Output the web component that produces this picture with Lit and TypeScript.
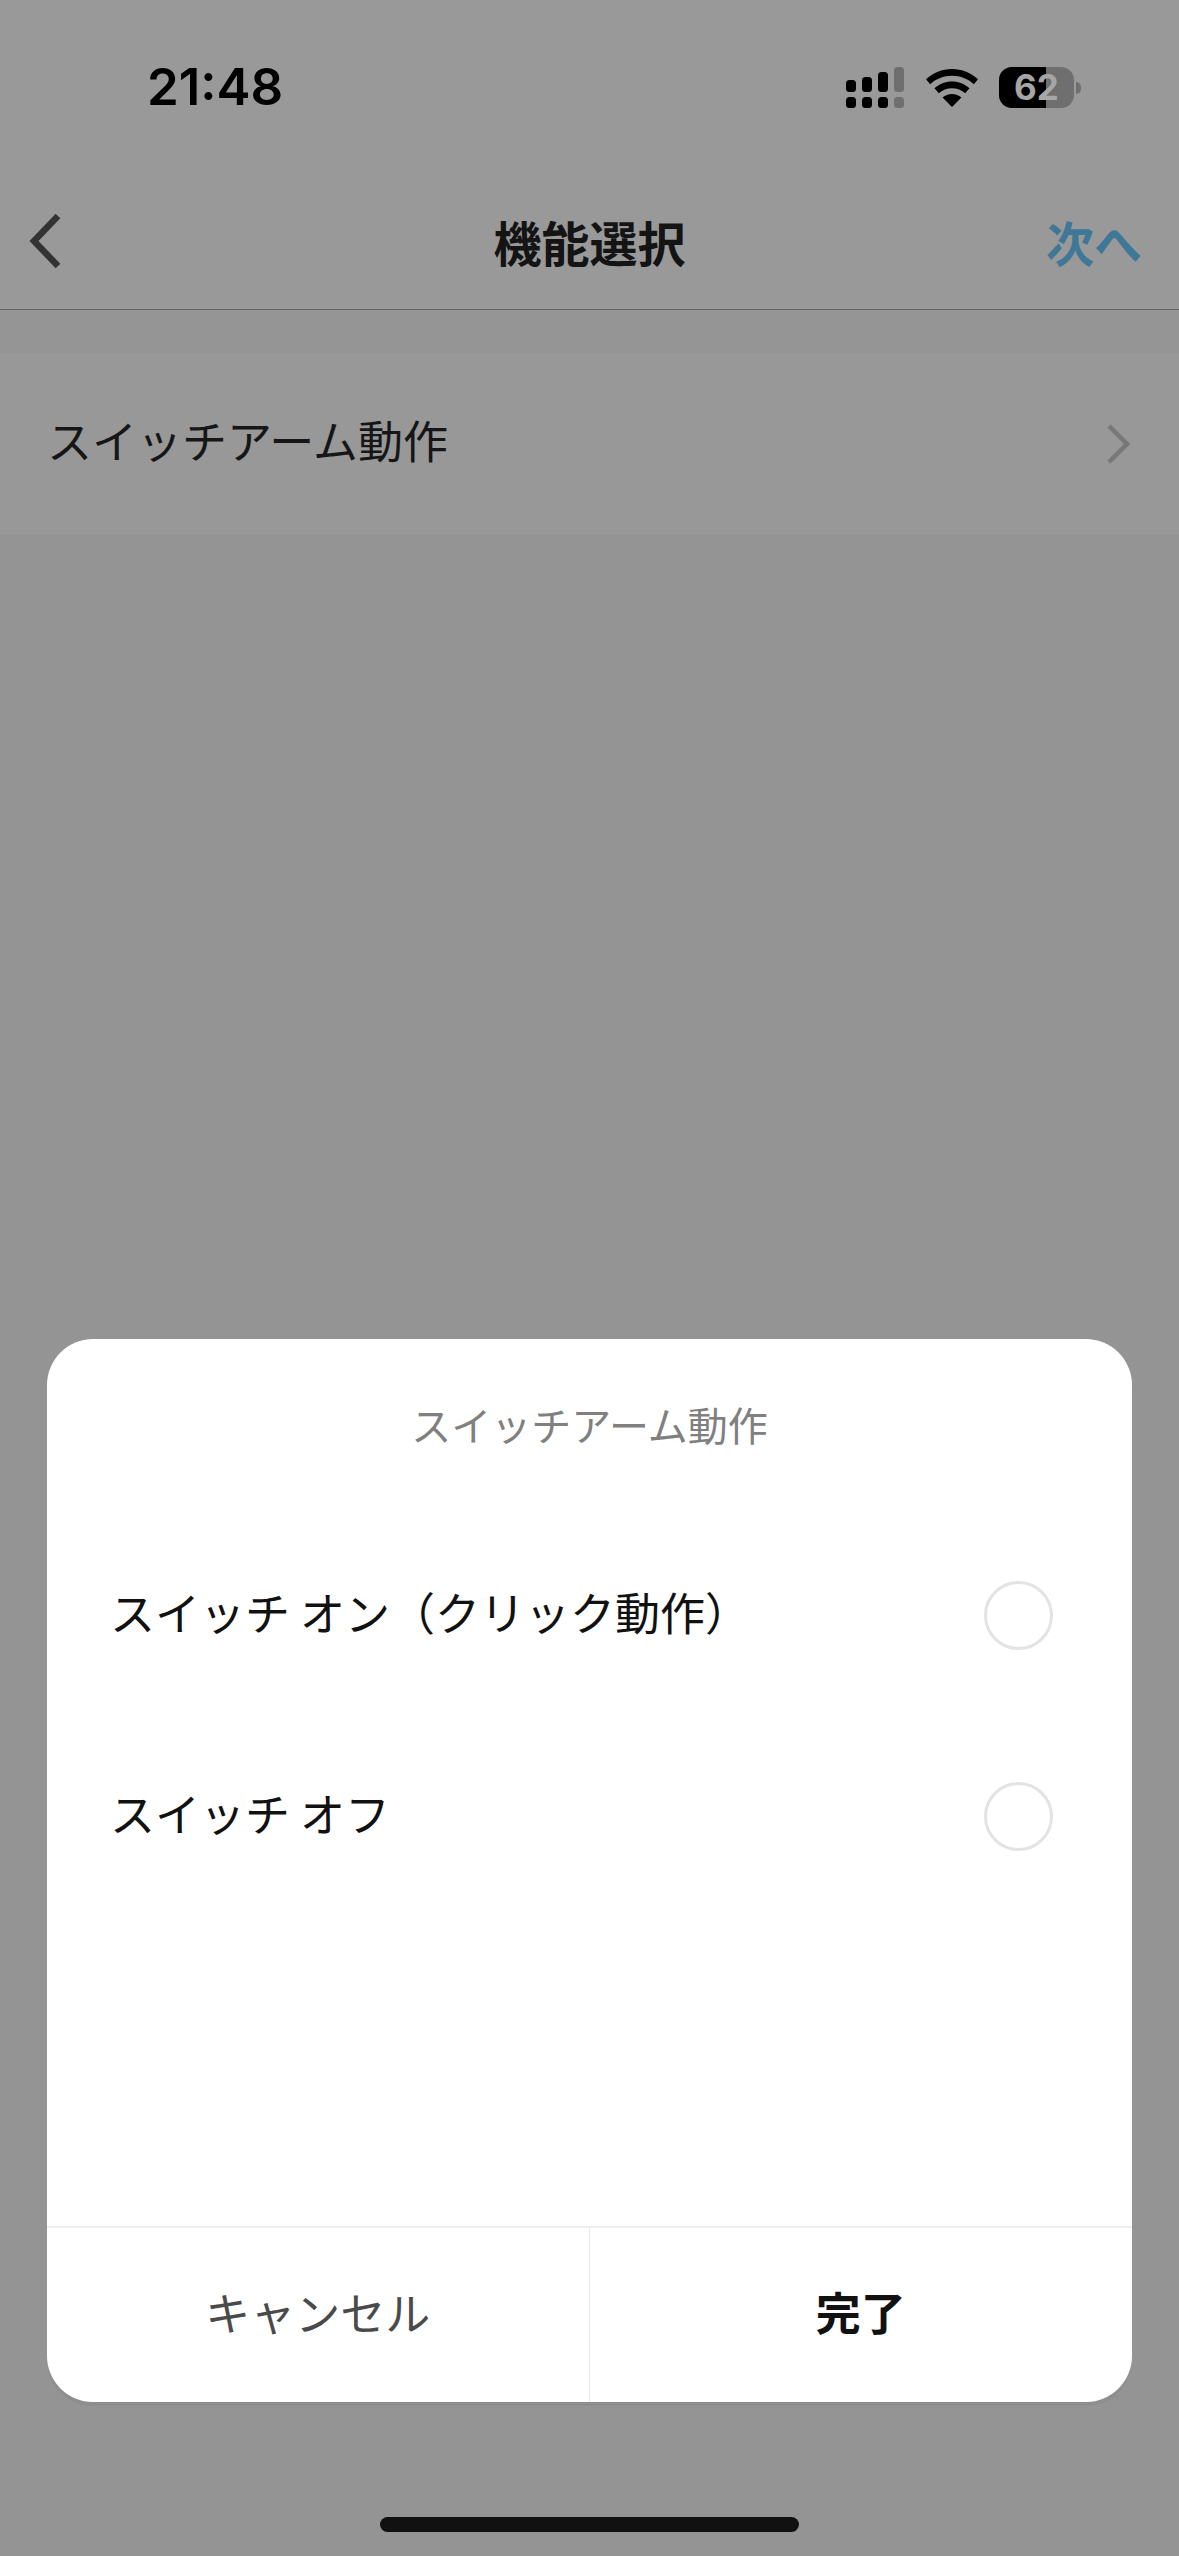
import { LitElement, html, css, svg } from "lit";
import { customElement } from "lit/decorators.js";

function bar(x: number, y: number, h: number, f: string) {
  return svg`<rect x=${x} y=${y} width="10" height=${h} rx="3.5" fill=${f}></rect>`;
}

@customElement("app-root")
export class AppRoot extends LitElement {
  static styles = css`
    :host { display: block; }
    * { box-sizing: border-box; }
    .page {
      position: relative; width: 1179px; height: 2556px; overflow: hidden;
      background: #949494; color: #000;
      font-family: "Noto Sans CJK JP", "Noto Sans", sans-serif;
    }
    .top { background: #999; height: 310px; border-bottom: 1px solid #666; }
    .status { height: 175px; padding-left: 147px; display: flex; align-items: flex-start; }
    .time {
      font-family: Inter, "Liberation Sans", sans-serif; font-weight: 600; font-size: 51px;
      line-height: 52px; margin-top: 61px; color: #000;
    }
    .status-icons { margin-left: auto; margin-right: 98px; margin-top: 67px; display: flex; align-items: flex-start; }
    .signal { display: block; }
    .wifi { display: block; margin-left: 21px; margin-top: 2px; }
    .battery { display: flex; align-items: center; margin-left: 21px; }
    .batt-body {
      position: relative; width: 75px; height: 41px; border-radius: 13px;
      background: #6f6f6f; display: flex; align-items: center; justify-content: center;
    }
    .batt-fill { position: absolute; left: 0; top: 0; bottom: 0; width: 47px; background: #000; border-radius: 13px 0 0 13px; }
    .batt-num {
      position: relative; font-family: Inter, "Liberation Sans", sans-serif; font-weight: 700;
      font-size: 35px; line-height: 41px; color: #a6a6a6;
    }
    .nub { width: 5px; height: 12px; margin-left: 2px; background: #6f6f6f; border-radius: 0 6px 6px 0; }
    .nav {
      height: 134px; display: grid; grid-template-columns: 200px 1fr 200px; align-items: center;
      margin-top: -1px;
    }
    .back { display: block; margin-left: 28px; }
    .title { text-align: center; font-size: 48px; font-weight: 700; color: #141414; line-height: 60px; }
    .next { text-align: right; font-size: 48px; font-weight: 700; color: #3f7796; line-height: 60px; padding-right: 37px; }
    .band-gap { height: 43px; background: #959595; }
    .row {
      height: 181px; background: #989898; display: flex; align-items: center; justify-content: space-between;
      padding: 0 49px 0 47px; font-size: 45px; line-height: 60px; color: #161616;
    }
    .row span { margin-bottom: 8px; }
    .row svg { display: block; }
    .overlay {
      position: absolute; inset: 0; display: flex; flex-direction: column; align-items: center;
      padding-top: 1339px;
    }
    .sheet {
      width: 1085px; height: 1063px; background: #fff; border-radius: 46px; display: flex; flex-direction: column;
      box-shadow: 0 4px 0 #8e8e8e; overflow: hidden;
    }
    .sheet-title { text-align: center; font-size: 40px; line-height: 56px; color: #808080; margin-top: 57px; height: 56px; }
    .options { display: flex; flex-direction: column; gap: 101px; margin-top: 113px; padding: 0 79px 0 63px; flex: 1; }
    .opt { height: 100px; display: flex; align-items: center; justify-content: space-between; font-size: 45px; color: #111; line-height: 60px; }
    .opt span { margin-bottom: 6px; }
    .radio { width: 69px; height: 69px; border-radius: 50%; border: 3px solid #e3e3e3; flex: none; }
    .actions { height: 176px; display: grid; grid-template-columns: 542.5px 542.5px; border-top: 2px solid #eee; }
    .btn { display: flex; align-items: center; justify-content: center; font-size: 45px; line-height: 60px; padding-bottom: 6px; }
    .cancel { color: #4a4a4a; border-right: 1px solid #e8e8e8; }
    .done { color: #111; font-weight: 700; }
    .home { position: absolute; left: 380px; top: 2517px; width: 419px; height: 15px; border-radius: 8px; background: #111; }
  `;

  render() {
    return html`
      <div class="page">
        <div class="top">
          <div class="status">
            <div class="time">21:48</div>
            <div class="status-icons">
              <svg class="signal" width="59" height="42" viewBox="0 0 59 42">
                ${[[0, 13, 12], [16, 10, 15], [32, 5, 20]].map(([x, y, h]) => bar(x, y, h, "#000"))}
                ${[0, 16, 32].map((x) => bar(x, 30, 11, "#000"))}
                ${bar(48, 0, 25, "#6f6f6f")}
                ${bar(48, 30, 11, "#6f6f6f")}
              </svg>
              <svg class="wifi" width="52" height="38" viewBox="0 0 52 38">
                <path d="M26 0C16 0 7 3.8 0 10.2l4.2 5C10 9.9 17.6 6.8 26 6.8s16 3.1 21.8 8.4l4.2-5C45 3.8 36 0 26 0z" fill="#000"></path>
                <path d="M26 12.6c-6.7 0-12.8 2.5-17.5 6.7l4.3 5c3.5-3.1 8.1-5 13.2-5s9.7 1.9 13.2 5l4.3-5C38.8 15.1 32.7 12.6 26 12.6z" fill="#000"></path>
                <path d="M26 25c-3.6 0-6.9 1.3-9.4 3.4L26 38l9.4-9.6C32.9 26.3 29.6 25 26 25z" fill="#000"></path>
              </svg>
              <div class="battery">
                <div class="batt-body">
                  <div class="batt-fill"></div>
                  <div class="batt-num">62</div>
                </div>
                <div class="nub"></div>
              </div>
            </div>
          </div>
          <div class="nav">
            <svg class="back" width="34" height="58" viewBox="0 0 34 58">
              <path d="M30 4 L6 29 L30 54" fill="none" stroke="#333" stroke-width="6.5"></path>
            </svg>
            <div class="title">機能選択</div>
            <div class="next">次へ</div>
          </div>
        </div>
        <div class="band-gap"></div>
        <div class="row">
          <span>スイッチアーム動作</span>
          <svg width="24" height="42" viewBox="0 0 24 42">
            <path d="M3 3 L21 21 L3 39" fill="none" stroke="#777" stroke-width="4.5"></path>
          </svg>
        </div>
        <div class="overlay">
          <div class="sheet">
            <div class="sheet-title">スイッチアーム動作</div>
            <div class="options">
              <div class="opt"><span>スイッチ オン（クリック動作）</span><div class="radio"></div></div>
              <div class="opt"><span>スイッチ オフ</span><div class="radio"></div></div>
            </div>
            <div class="actions">
              <div class="btn cancel">キャンセル</div>
              <div class="btn done">完了</div>
            </div>
          </div>
        </div>
        <div class="home"></div>
      </div>
    `;
  }
}
